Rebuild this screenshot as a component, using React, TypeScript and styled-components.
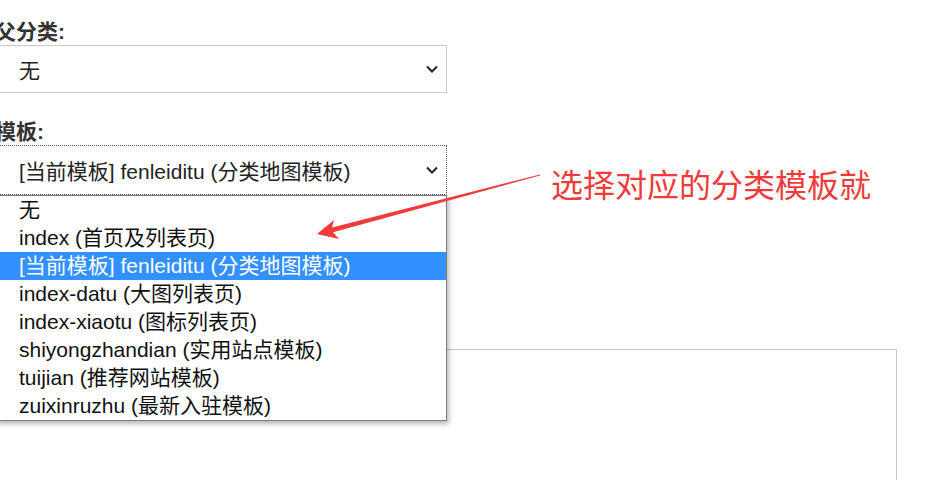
import React from 'react';
import styled, { createGlobalStyle } from 'styled-components';

const GlobalStyle = createGlobalStyle`
  body {
    margin: 0;
    background: #fff;
    font-family: "Liberation Sans", "Noto Sans CJK SC", Arial, sans-serif;
  }
`;

const Page = styled.div`
  position: relative;
  width: 940px;
  height: 480px;
  overflow: hidden;
  background: #fff;
`;

const Form = styled.div`
  display: flex;
  flex-direction: column;
  width: 452px;
  margin-left: -5px;
  padding-top: 20px;
`;

const Label = styled.div<{ $gap?: number }>`
  font-size: 21px;
  font-weight: bold;
  color: #333;
  line-height: 24px;
  height: 24px;
  margin-top: ${p => p.$gap ?? 0}px;
  margin-bottom: 1px;
`;

const SelectWrap = styled.div`
  position: relative;
`;

const SelectBox = styled.div<{ $focused?: boolean; $height: number }>`
  box-sizing: border-box;
  height: ${p => p.$height}px;
  display: flex;
  align-items: center;
  justify-content: space-between;
  padding: 0 7px 0 23px;
  border: 1px ${p => (p.$focused ? 'dotted #555' : 'solid #ccc')};
  font-size: 21px;
  color: #222;
  background: #fff;
`;

const Chevron = () => (
  <svg width="14" height="10" viewBox="0 0 14 10">
    <polyline points="2,2.5 7,7.5 12,2.5" fill="none" stroke="#222" strokeWidth="2" />
  </svg>
);

const OptionList = styled.div`
  position: absolute;
  top: 100%;
  left: 0;
  right: 0;
  box-sizing: border-box;
  border: 1px solid #7a7a7a;
  background: #fff;
  box-shadow: 2px 3px 5px rgba(0, 0, 0, 0.28);
  z-index: 2;
`;

const Option = styled.div<{ $active?: boolean }>`
  height: 28px;
  line-height: 28px;
  padding-left: 23px;
  font-size: 21px;
  white-space: nowrap;
  color: ${p => (p.$active ? '#fff' : '#111')};
  background: ${p => (p.$active ? '#3391ff' : 'transparent')};
`;

const EditorBox = styled.div`
  box-sizing: border-box;
  width: 902px;
  height: 220px;
  margin-left: -5px;
  margin-top: 154px;
  border: 1px solid #c8c8c8;
`;

const Note = styled.div`
  position: absolute;
  left: 551px;
  top: 166px;
  font-size: 32px;
  line-height: 40px;
  color: #ef3b3b;
  white-space: nowrap;
  z-index: 3;
`;

const ArrowLayer = styled.svg`
  position: absolute;
  left: 0;
  top: 0;
  z-index: 3;
  pointer-events: none;
`;

const templates = [
  '无',
  'index (首页及列表页)',
  '[当前模板] fenleiditu (分类地图模板)',
  'index-datu (大图列表页)',
  'index-xiaotu (图标列表页)',
  'shiyongzhandian (实用站点模板)',
  'tuijian (推荐网站模板)',
  'zuixinruzhu (最新入驻模板)',
];

export default function App() {
  return (
    <>
      <GlobalStyle />
      <Page>
        <Form>
          <Label>父分类:</Label>
          <SelectBox $height={48}>
            <span>无</span>
            <Chevron />
          </SelectBox>

          <Label $gap={27}>模板:</Label>
          <SelectWrap>
            <SelectBox $height={50} $focused>
              <span>[当前模板] fenleiditu (分类地图模板)</span>
              <Chevron />
            </SelectBox>
            <OptionList>
              {templates.map((t, i) => (
                <Option key={t} $active={i === 2}>
                  {t}
                </Option>
              ))}
            </OptionList>
          </SelectWrap>
        </Form>

        <EditorBox />

        <Note>选择对应的分类模板就</Note>
        <ArrowLayer width="940" height="480" viewBox="0 0 940 480">
          <polygon
            points="317,234 334,220 332,227.5 540,174.4 540,175.6 333,232.3 339,239"
            fill="#ef3b3b"
          />
        </ArrowLayer>
      </Page>
    </>
  );
}
